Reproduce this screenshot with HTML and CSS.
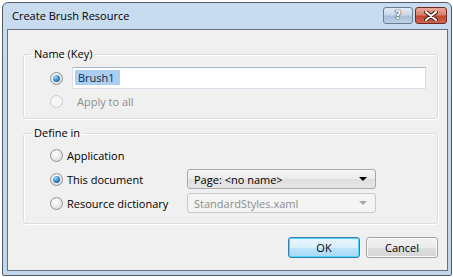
FILE: index.html
```html
<!DOCTYPE html>
<html lang="en">
<head>
  <meta charset="UTF-8" />
  <title>Create Brush Resource</title>
  <link rel="stylesheet" href="styles.css">
</head>
<body>

  <div class="window">
    <div class="titlebar">
      <span class="title">Create Brush Resource</span>
      <div class="caption-buttons">
        <button class="cap-btn help">?</button>
        <button class="cap-btn close">
          <svg width="14" height="10" viewBox="0 0 14 10">
            <path d="M2 1 L12 9 M12 1 L2 9" stroke="#3b1410" stroke-width="4" stroke-linecap="round"/>
            <path d="M2 1 L12 9 M12 1 L2 9" stroke="#ffffff" stroke-width="2.2" stroke-linecap="round"/>
          </svg>
        </button>
      </div>
    </div>

    <div class="client">
      <fieldset class="group group-name">
        <legend>Name (Key)</legend>
        <div class="group-body">
          <div class="name-row">
            <span class="radio checked"></span>
            <div class="textbox"><span class="selection">Brush1</span></div>
          </div>
          <div class="option disabled">
            <span class="radio"></span>
            Apply to all
          </div>
        </div>
      </fieldset>

      <fieldset class="group group-define">
        <legend>Define in</legend>
        <div class="group-body define-grid">
          <div class="option"><span class="radio"></span>Application</div>
          <div></div>
          <div class="option"><span class="radio checked"></span>This document</div>
          <div class="combo">
            <span>Page: &lt;no name&gt;</span>
            <span class="arrow"></span>
          </div>
          <div class="option"><span class="radio"></span>Resource dictionary</div>
          <div class="combo disabled">
            <span>StandardStyles.xaml</span>
            <span class="arrow"></span>
          </div>
        </div>
      </fieldset>

      <div class="actions">
        <button class="btn default">OK</button>
        <button class="btn">Cancel</button>
      </div>
    </div>
  </div>

</body>
</html>
```

FILE: styles.css
```css
* {
  box-sizing: border-box;
}

body {
  margin: 0;
  background: #ffffff;
  font-family: "Open Sans", "Noto Sans", sans-serif;
  font-size: 11px;
  color: #000;
}

.window {
  margin: 2px 0 0 2px;
  width: 450px;
  height: 274px;
  border: 1px solid #4f5d6b;
  border-radius: 6px 6px 2px 2px;
  background: linear-gradient(#c9dbef, #c1d5eb);
  padding: 0 3px 4px 4px;
  display: flex;
  flex-direction: column;
}

.titlebar {
  height: 26px;
  display: flex;
  justify-content: space-between;
  align-items: flex-start;
  padding: 4px 1px 0 5px;
}

.title {
  line-height: 18px;
  font-size: 11px;
  color: #000;
}

.caption-buttons {
  display: flex;
  gap: 2px;
}

.cap-btn {
  height: 17px;
  border: 1px solid #6b7c8d;
  border-radius: 3px;
  padding: 0;
  display: flex;
  align-items: center;
  justify-content: center;
}

.help {
  width: 30px;
  background: linear-gradient(#e1ebf6 0%, #c9d9ea 45%, #a9bfd6 55%, #bfd3e7 100%);
  color: #fff;
  font-family: "DejaVu Sans", sans-serif;
  font-weight: bold;
  font-size: 12px;
  line-height: 15px;
  text-shadow: 0 0 1px #27394c, 0 0 1px #27394c, 0 0 1px #27394c;
}

.close {
  width: 32px;
  border-color: #6e2a22;
  background: linear-gradient(#e9a99b 0%, #d7826f 45%, #c2452f 55%, #d0674f 100%);
}

.client {
  flex: 1;
  border: 1px solid #66737f;
  background: #f0f0f0;
  padding: 16px 9px 0 15px;
}

.group {
  margin: 0;
  border: 1px solid #d5dfe5;
  border-radius: 3px;
  box-shadow: inset 1px 1px 0 #fff, 1px 1px 0 #fff;
  padding: 5px 11px 9px 8px;
  min-width: 0;
}

.group legend {
  padding: 0 2px;
  line-height: 16px;
}

.group-body {
  padding-left: 18px;
}

.name-row {
  display: flex;
  align-items: center;
  gap: 9px;
  margin-bottom: 4px;
}

.textbox {
  flex: 1;
  height: 22px;
  background: #fff;
  border: 1px solid #d7e0ea;
  border-top-color: #a6b7c8;
  padding: 2px 0 0 2px;
}

.selection {
  display: inline-block;
  background: #aacff3;
  color: #0f2a44;
  padding: 0 5px 0 3px;
  line-height: 15px;
}

.option {
  display: flex;
  align-items: center;
  gap: 4px;
  height: 16px;
  white-space: nowrap;
}

.group-name .option {
  gap: 14px;
}

.option.disabled {
  color: #8d8d8d;
}

.radio {
  width: 13px;
  height: 13px;
  flex: none;
  border-radius: 50%;
  border: 1px solid #8f9091;
  background: radial-gradient(circle at 40% 35%, #ffffff 0%, #e8e8e8 55%, #d4d4d4 100%);
  display: flex;
  align-items: center;
  justify-content: center;
}

.radio.checked::after {
  content: "";
  width: 7px;
  height: 7px;
  border-radius: 50%;
  background: radial-gradient(circle at 35% 30%, #a7dcff 0%, #3d8fd0 45%, #174f86 100%);
}

.disabled .radio {
  border-color: #c8c9ca;
  background: #f6f6f6;
}

.group-define {
  margin-top: 6px;
  padding-top: 4px;
  padding-bottom: 10px;
}

.define-grid {
  display: grid;
  grid-template-columns: 137px 189px;
  grid-auto-rows: 20px;
  row-gap: 4px;
  align-items: center;
}

.define-grid .option {
  height: 20px;
  padding-top: 1px;
}

.combo {
  height: 20px;
  border: 1px solid #a9a9a9;
  border-radius: 3px;
  background: linear-gradient(#f4f4f4 0%, #ececec 50%, #dfdfdf 51%, #e6e6e6 100%);
  display: flex;
  align-items: center;
  justify-content: space-between;
  padding: 0 8px 0 6px;
}

.combo .arrow {
  width: 0;
  height: 0;
  border-left: 4px solid transparent;
  border-right: 4px solid transparent;
  border-top: 4px solid #000;
}

.combo.disabled {
  border-color: #c9c9c9;
  background: #f4f4f4;
  color: #8d8d8d;
}

.combo.disabled .arrow {
  border-top-color: #a6a6a6;
}

.actions {
  display: flex;
  justify-content: flex-end;
  gap: 6px;
  margin-top: 13px;
}

.btn {
  width: 72px;
  height: 21px;
  font-family: inherit;
  font-size: 11px;
  border: 1px solid #a3a3a3;
  border-radius: 3px;
  background: linear-gradient(#f2f2f2 0%, #ebebeb 50%, #dddddd 51%, #d6d6d6 100%);
  box-shadow: inset 0 0 0 1px #fcfcfc;
  padding: 0;
  color: #000;
}

.btn.default {
  border-color: #3c7fb1;
  background: linear-gradient(#eaf6fd 0%, #d9f0fc 50%, #bee6fd 51%, #a7d9f5 100%);
  box-shadow: inset 0 0 0 1px #48d4fb;
}
```
